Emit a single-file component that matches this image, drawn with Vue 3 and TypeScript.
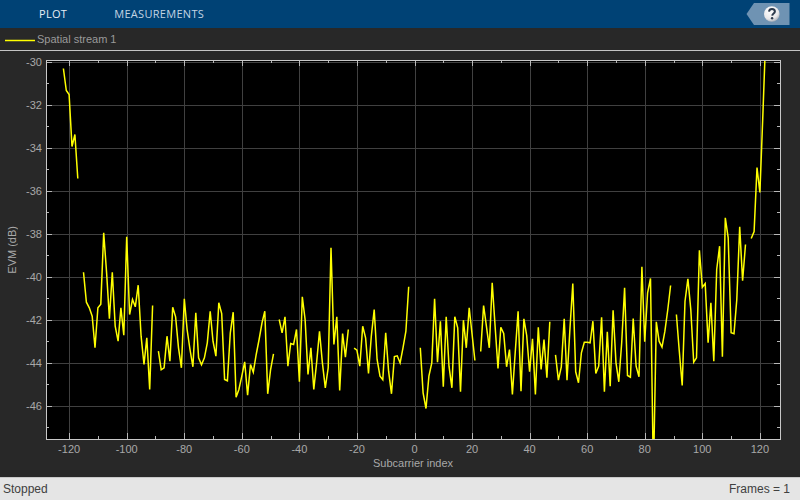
<script setup lang="ts">
const L = 46.5, R = 780.5, T = 60.5, B = 439.5
const W = R - L, H = B - T
const px = (k: number) => 415 - L + k * 2.878
const py = (v: number) => 62 - T + (-30 - v) * 21.5

const xTicks = Array.from({ length: 25 }, (_, i) => -120 + i * 10)
const yTicks = Array.from({ length: 18 }, (_, i) => -30 - i)
const xMajor = xTicks.filter(t => t % 20 === 0)
const yMajor = yTicks.filter(t => t % 2 === 0)

const pts = (start: number, ys: number[]) =>
  ys.map((y, i) => `${px(start + i).toFixed(1)},${(y - T).toFixed(1)}`).join(' ')
const z = (o: number, a: number[]) => a.map(v => o + v / 3)

const segments = [
  pts(-122, [69, 91, 95, 147, 135, 179]),
  pts(-115, z(220, [158, 248, 265, 290, 385, 265, 254, 40, 160, 298, 158, 320, 365, 265, 347, 52, 285, 240, 262, 197, 350, 435, 355, 510, 258])),
  pts(-89, [
    ...z(220, [395, 451, 445, 350, 425, 263, 292, 385, 445, 238, 330, 390, 442, 280, 415, 436, 415, 370, 275, 365, 410, 250, 282, 480, 484, 340]),
    ...z(230, [248, 503, 480, 440, 397, 497, 405, 428, 375, 330, 280, 245, 493, 420, 373])
  ]),
  pts(-47, z(230, [270, 310, 262, 410, 342, 345, 300, 457, 202, 270, 435, 355, 480, 400, 305, 400, 475, 415, 55, 345, 262, 483, 312, 383, 300])),
  pts(-21, z(230, [356, 362, 410, 290, 325, 432, 320, 240, 390, 440, 451, 310, 425, 493, 381, 379, 400, 355, 305, 172])),
  pts(2, z(260, [265, 400, 447, 350, 310, 118, 308, 185, 382, 172, 320, 385, 172, 205, 397, 182, 265, 145, 225, 303])),
  pts(23, z(260, [276, 138, 200, 265, 70, 200, 327, 203, 222, 322, 270, 405, 280, 155, 395, 178, 228, 337, 238, 405, 203, 330, 240, 355, 187])),
  pts(49, [
    ...z(260, [286, 362, 322, 178, 362, 210, 72, 337, 370, 280, 248, 248, 250, 185]),
    ...z(210, [492, 470, 323, 547, 367, 530, 302, 460, 517, 400, 235, 498, 503, 327, 470, 502, 172, 397, 250, 207, 800, 337, 395, 413, 365, 300, 228])
  ]),
  pts(91, z(210, [315, 425, 528, 275, 208, 300, 458, 445, 122, 233, 222, 400, 280, 455, 180, 110, 442, 25, 85, 370, 373, 270, 52, 214, 105])),
  pts(117, [239, 232, 168, 193, 120, 40])
]
</script>

<template>
  <div class="app">
    <header class="toolbar">
      <nav class="tabs">
        <span class="tab plot">PLOT</span>
        <span class="tab">MEASUREMENTS</span>
      </nav>
      <div class="help">
        <svg width="44" height="22" viewBox="0 0 44 22">
          <path d="M8 0H43.5V22H8L0.5 11Z" fill="#6f93b3" />
          <defs>
            <radialGradient id="ball" cx="0.4" cy="0.3" r="0.8">
              <stop offset="0" stop-color="#ffffff" />
              <stop offset="0.65" stop-color="#e8e8ea" />
              <stop offset="1" stop-color="#8f97a3" />
            </radialGradient>
          </defs>
          <circle cx="25.8" cy="11" r="7.8" fill="url(#ball)" />
          <path d="M23 8.6C23.2 6.9 24.4 6 26 6C27.7 6 28.9 7 28.9 8.5C28.9 10.4 26.3 10.5 26.2 12.6" fill="none" stroke="#2c3a4c" stroke-width="2" />
          <circle cx="26.1" cy="15.2" r="1.2" fill="#2c3a4c" />
        </svg>
      </div>
    </header>

    <div class="legend">
      <svg class="legend-line" width="30" height="3"><line x1="0" y1="1.5" x2="30" y2="1.5" stroke="#ffff00" stroke-width="1.5" /></svg>
      <span>Spatial stream 1</span>
    </div>

    <main class="plot-area">
      <div class="y-title-wrap"><span class="y-title">EVM (dB)</span></div>
      <span v-for="t in yMajor" :key="t" class="y-label" :style="{ top: py(t) + T - 51 + 'px' }">{{ t }}</span>
      <span v-for="t in xMajor" :key="t" class="x-label" :style="{ left: px(t) + 'px' }">{{ t }}</span>
      <div class="x-title">Subcarrier index</div>
      <svg class="axes" :width="W + 1" :height="H + 1" :viewBox="`0 0 ${W + 1} ${H + 1}`">
        <rect x="0" y="0" :width="W + 1" :height="H + 1" fill="#000" />
        <g stroke="#404040" stroke-width="1">
          <line v-for="t in xMajor" :key="'gx' + t" :x1="Math.round(px(t)) + 0.5" y1="0" :x2="Math.round(px(t)) + 0.5" :y2="H" />
          <line v-for="t in yMajor" :key="'gy' + t" x1="0" :x2="W" :y1="Math.round(py(t)) + 0.5" :y2="Math.round(py(t)) + 0.5" />
        </g>
        <g stroke="#b8b8b8" stroke-width="1">
          <template v-for="t in xTicks" :key="'tx' + t">
            <line :x1="Math.round(px(t)) + 0.5" y1="0.5" :x2="Math.round(px(t)) + 0.5" :y2="t % 20 === 0 ? 6 : 3" />
            <line :x1="Math.round(px(t)) + 0.5" :y1="H + 0.5" :x2="Math.round(px(t)) + 0.5" :y2="H - (t % 20 === 0 ? 6 : 3)" />
          </template>
          <template v-for="t in yTicks" :key="'ty' + t">
            <line x1="0.5" :x2="t % 2 === 0 ? 6 : 3" :y1="Math.round(py(t)) + 0.5" :y2="Math.round(py(t)) + 0.5" />
            <line :x1="W + 0.5" :x2="W - (t % 2 === 0 ? 6 : 3)" :y1="Math.round(py(t)) + 0.5" :y2="Math.round(py(t)) + 0.5" />
          </template>
        </g>
        <svg x="0" y="0" :width="W" :height="H">
          <polyline v-for="(s, i) in segments" :key="i" :points="s" fill="none" stroke="#ffff00" stroke-width="1.5" stroke-linejoin="miter" />
        </svg>
        <rect x="0.5" y="0.5" :width="W" :height="H" fill="none" stroke="#c8c8c8" stroke-width="1" />
      </svg>
    </main>

    <footer class="status">
      <span>Stopped</span>
      <span>Frames = 1</span>
    </footer>
  </div>
</template>

<style>
html, body { margin: 0; padding: 0; }
</style>

<style scoped>
.app {
  width: 800px;
  height: 500px;
  display: flex;
  flex-direction: column;
  overflow: hidden;
  background: #282828;
  font-family: "Liberation Sans", Arial, sans-serif;
}
.toolbar {
  height: 28px;
  flex: none;
  background: #004275;
  display: flex;
  justify-content: space-between;
  align-items: flex-start;
  font-family: "Open Sans", sans-serif;
}
.tabs { display: flex; padding-left: 39px; gap: 47px; }
.tab { font-size: 11px; line-height: 27px; color: #c3d4e3; letter-spacing: 0.3px; }
.tab.plot { color: #e6eef5; }
.help { margin-top: 3px; margin-right: 10px; height: 22px; }
.help svg { display: block; }
.legend {
  height: 22px;
  flex: none;
  border-bottom: 1px solid #c4c4c4;
  display: flex;
  align-items: center;
  padding-left: 5px;
  gap: 2px;
  font-size: 11px;
  color: #9a9a9a;
}
.legend-line { margin-top: 2px; }
.plot-area { flex: 1; position: relative; }
.axes { position: absolute; left: 46px; top: 9px; display: block; }
.y-title-wrap {
  position: absolute;
  left: 0;
  top: 9px;
  width: 24px;
  height: 379px;
  display: flex;
  align-items: center;
  justify-content: center;
}
.y-title {
  writing-mode: vertical-rl;
  transform: rotate(180deg);
  font-size: 11px;
  color: #a8a8a8;
}
.y-label {
  position: absolute;
  left: 0;
  width: 42px;
  text-align: right;
  margin-top: -7px;
  font-size: 11px;
  line-height: 14px;
  color: #a8a8a8;
}
.x-label {
  position: absolute;
  top: 391px;
  font-size: 11px;
  line-height: 14px;
  color: #a8a8a8;
  transform: translateX(-50%);
  margin-left: 46px;
}
.x-title {
  position: absolute;
  left: 46px;
  width: 734px;
  top: 405px;
  text-align: center;
  font-size: 11px;
  line-height: 14px;
  color: #a8a8a8;
}
.status {
  height: 23px;
  flex: none;
  box-sizing: border-box;
  background: #e5e5e5;
  border-top: 1px solid #c8c8c8;
  display: flex;
  justify-content: space-between;
  align-items: center;
  padding: 0 10px 0 3px;
  font-size: 12px;
  color: #404040;
}
</style>
